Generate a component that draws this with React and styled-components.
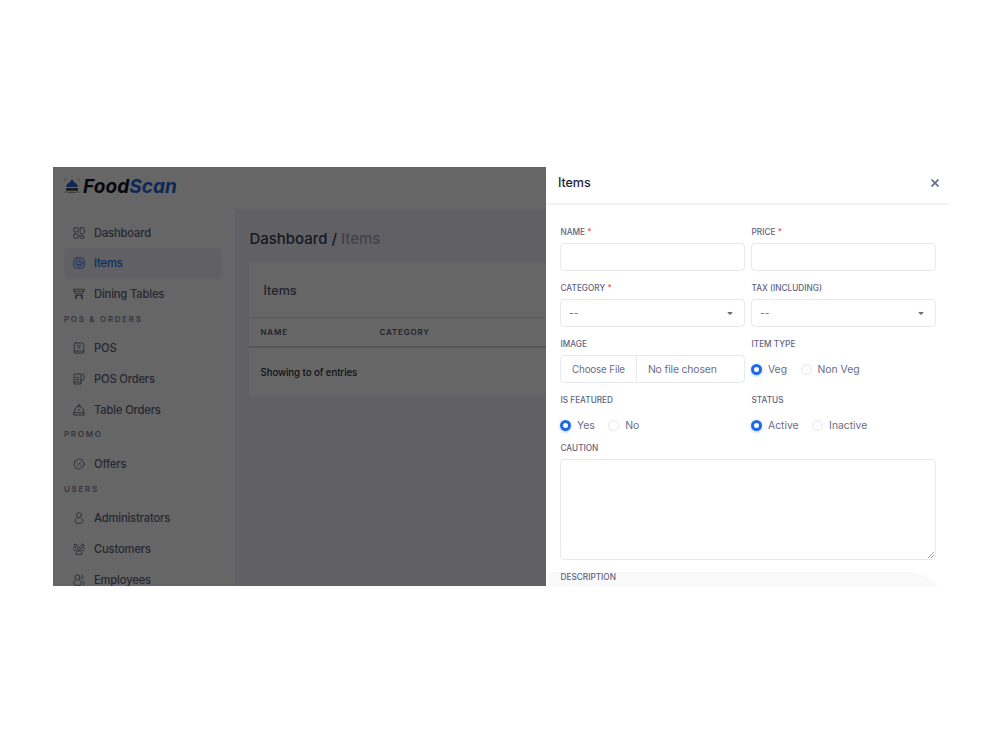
import React from "react";
import styled, { createGlobalStyle } from "styled-components";
import { FaXmark, FaCaretDown } from "react-icons/fa6";

const GlobalStyle = createGlobalStyle`
  *, *::before, *::after {
    box-sizing: border-box;
  }
  body {
    margin: 0;
    background: #fff;
    font-family: Inter, Roboto, sans-serif;
    color: #6a6d86;
  }
`;

const Page = styled.div`
  height: 750px;
  padding: 167px 50px 0 53px;
  overflow: hidden;
`;

const Screen = styled.div`
  display: grid;
  grid-template-columns: 493px 1fr;
  height: 419px;
  overflow: hidden;
`;

const Backdrop = styled.div`
  position: relative;
  display: grid;
  grid-template: 42px 1fr / 182px 1fr;
  height: 419px;
  overflow: hidden;
  background: #fff;

  &::after {
    content: "";
    position: absolute;
    inset: 0;
    background: rgba(0, 0, 0, 0.6);
  }
`;

const Header = styled.header`
  grid-column: 1 / -1;
  display: flex;
  align-items: center;
  padding: 0 0 4px 11px;
`;

const LogoText = styled.div`
  margin-left: 3px;
  padding-top: 1px;
  font-size: 19px;
  line-height: 20px;
  font-weight: 700;
  font-style: italic;
  letter-spacing: 0.08px;
  color: #14141e;

  span {
    color: #1f66d8;
  }
`;

const Sidebar = styled.nav`
  padding: 8.15px 13px 0 11px;
  overflow: hidden;
`;

const NavItem = styled.div`
  display: flex;
  align-items: center;
  gap: 9px;
  height: 30.8px;
  padding-left: 9px;
  border-radius: 5px;
  font-size: 11.2px;
  font-weight: 500;
  letter-spacing: -0.16px;
  color: ${(props) => (props.$active ? "#2a70e6" : "#62647e")};
  background: ${(props) => (props.$active ? "#f1f0fc" : "transparent")};
`;

const NavTitle = styled.div`
  height: 23.4px;
  font-size: 8px;
  line-height: 18.4px;
  font-weight: 600;
  letter-spacing: 1.7px;
  color: #85879a;
`;

const Main = styled.main`
  padding: 20px 0 0 14px;
  background: #f2f1fd;
  overflow: hidden;
`;

const Breadcrumb = styled.div`
  height: 34px;
  padding-left: 0.5px;
  font-size: 15px;
  line-height: 20px;
  font-weight: 500;
  letter-spacing: -0.02px;
  color: #3c3e54;

  span {
    color: #a0a3bd;
  }
`;

const Card = styled.section`
  height: 133px;
  background: #fff;
`;

const CardTitle = styled.h3`
  margin: 0;
  height: 55px;
  padding-left: 14.5px;
  font-size: 12.6px;
  line-height: 56px;
  font-weight: 500;
  color: #55576e;
  border-bottom: 1px solid #dcdee8;
`;

const TableHead = styled.div`
  display: grid;
  grid-template-columns: 119px 1fr;
  height: 30px;
  padding-left: 11.5px;
  font-size: 8px;
  line-height: 28px;
  font-weight: 600;
  letter-spacing: 0.8px;
  color: #55576e;
  border-bottom: 2px solid #d8dae4;
`;

const TableInfo = styled.div`
  padding-left: 11.5px;
  font-size: 9.7px;
  line-height: 49px;
  font-weight: 500;
  letter-spacing: -0.08px;
  color: #2c2e42;
`;

const Drawer = styled.aside`
  height: 419px;
  overflow: hidden;
  background: #fff;
`;

const DrawerHeader = styled.div`
  display: flex;
  align-items: center;
  justify-content: space-between;
  height: 38px;
  padding: 0 9.5px 5px 12px;
  border-bottom: 2px solid #f3f3f5;
  color: #666980;

  h2 {
    margin: 0;
    font-size: 12.6px;
    line-height: 18px;
    font-weight: 500;
    letter-spacing: -0.12px;
    color: #1f1f39;
  }
`;

const CloseIcon = styled(FaXmark)`
  stroke: currentColor;
  stroke-width: 12px;
`;

const Form = styled.form`
  display: grid;
  grid-template-columns: 185px 185px;
  column-gap: 6px;
  padding: 21px 14px 0;
`;

const Field = styled.div`
  grid-column: ${(props) => (props.$wide ? "1 / -1" : "auto")};
  height: ${(props) => props.$height || 56}px;
`;

// last row, cut off by the bottom edge of the drawer
const FadedField = styled(Field)`
  margin: 0 -13px;
  padding: 0 13px;
  background: #f9f9f9;
  clip-path: polygon(0 1px, 364px 1px, 378px 5px, 392px 15px, 0 15px);
`;

const Label = styled.div`
  height: 17px;
  padding-left: 0.5px;
  font-size: 8.25px;
  line-height: 12px;
  font-weight: 550;
  text-transform: uppercase;
  color: #5f6380;

  span {
    color: #ee5a5a;
  }
`;

const Control = styled.div`
  display: flex;
  align-items: center;
  justify-content: space-between;
  height: 28px;
  padding: 0 10px 0 8px;
  border: 1px solid #e8e9ee;
  border-radius: 4px;
  font-size: 10.2px;
`;

const FileControl = styled(Control)`
  justify-content: flex-start;
  padding: 0;
  letter-spacing: -0.15px;
`;

const FilePart = styled.span`
  padding: 0 11px;
  font-size: ${(props) => props.$size || "10.4px"};
  line-height: 27px;
  white-space: nowrap;

  & + & {
    border-left: 1px solid #e8e9ee;
  }
`;

const Radios = styled.div`
  display: flex;
  align-items: center;
  gap: 13.5px;
  height: 28px;
  font-size: 10.4px;
  letter-spacing: -0.02px;
`;

const Radio = styled.span`
  display: flex;
  align-items: center;
  gap: 6px;

  &::before {
    content: "";
    width: 11px;
    height: 11px;
    border-radius: 50%;
    border: ${(props) => (props.$checked ? "3px solid #1e69e8" : "1px solid #e5e6ec")};
    box-shadow: ${(props) => (props.$checked ? "0 1px 3px rgba(23, 105, 245, 0.35)" : "none")};
  }
`;

const TextArea = styled.div`
  display: flex;
  align-items: flex-end;
  justify-content: flex-end;
  height: 101px;
  border: 1px solid #e8e9ee;
  border-radius: 4px;
`;

const Icon = styled.svg`
  flex: none;
  width: 12px;
  height: 12px;
  fill: none;
  stroke: currentColor;
  stroke-width: 1.7;
  stroke-linecap: round;
  stroke-linejoin: round;
`;

const icons = {
  dashboard: (
    <>
      <rect x="1.5" y="1.5" width="8.5" height="8.5" rx="2" />
      <rect x="14" y="1.5" width="8.5" height="12" rx="2" />
      <rect x="1.5" y="14" width="8.5" height="8.5" rx="2" />
      <path d="M14 17.5h6.5a2 2 0 0 1 2 2v1a2 2 0 0 1-2 2H16a2 2 0 0 1-2-2z" />
    </>
  ),
  items: (
    <>
      <rect x="1.5" y="1.5" width="21" height="21" rx="6" />
      <circle cx="12" cy="12" r="6.5" />
      <path d="M9 12l3-2.5 3 2.5M10 15h4" />
    </>
  ),
  tables: (
    <path d="M1.5 2.5h21v4h-21zM3.5 6.5l1.5 5M20.5 6.5l-1.5 5M7.5 21V11h9v10M5 22v-7M19 22v-7M7.5 15h9" />
  ),
  pos: (
    <path d="M5 2h14a2.5 2.5 0 0 1 2.5 2.5V22h-19V4.5A2.5 2.5 0 0 1 5 2zM2.5 18h19M8 7.5h8M10 11.5h4" />
  ),
  posOrders: (
    <path d="M15 2H4a2 2 0 0 0-2 2v18h14V13M16 13V5a3 3 0 0 1 6 0v5a3 3 0 0 1-6 3M5.5 9h6M5.5 13h6M2 18h14" />
  ),
  tableOrders: (
    <path d="M3 17v-3a9 9 0 0 1 18 0v3M1.5 17.5h21V22h-21zM12 5V2M9 3.5l3-2 3 2M10.5 12h3" />
  ),
  offers: (
    <>
      <path d="M12 1.5l3 2 3.7.2 1 3.5 2.5 2.8-.5 4-1.5 3.5-3.5 1.7-2.2 2.3-2.5 1-3-1.5-4-.7-.8-3.5-2.4-3.3 1.2-3.5.3-3.7 4.2-2z" />
      <path d="M9 15l6-6M9.2 9.5h.1M14.8 14.5h.1" />
    </>
  ),
  admin: (
    <>
      <circle cx="12" cy="6.5" r="5" />
      <path d="M8 12.5c-3 1.5-4 4.5-3.5 7 .5 2 2 3 4 3h7c2 0 3.5-1 4-3 .5-2.5-.5-5.5-3.5-7" />
    </>
  ),
  customers: (
    <>
      <circle cx="5" cy="4.5" r="2.5" />
      <circle cx="19" cy="4.5" r="2.5" />
      <circle cx="12" cy="11" r="3" />
      <path d="M1.5 12c0-2 1.5-3 4-3M22.5 12c0-2-1.5-3-4-3M6 22c-.5-4 2-6 6-6s6.5 2 6 6zM3 15h4M17 15h4" />
    </>
  ),
  employees: (
    <>
      <circle cx="9" cy="6.5" r="5" />
      <path d="M5 12.5c-3 1.5-3.5 4.5-3.2 7 .3 2 1.7 3 3.7 3h7c2 0 3.4-1 3.7-3 .3-2.5-.2-5.5-3.2-7M17 2c4 1 4 8 0 9M19 14.5c3.5 1.5 4 5.5 1.5 8" />
    </>
  ),
};

const menu = [
  { icon: "dashboard", label: "Dashboard" },
  { icon: "items", label: "Items", active: true },
  { icon: "tables", label: "Dining Tables" },
  { title: "POS & ORDERS" },
  { icon: "pos", label: "POS" },
  { icon: "posOrders", label: "POS Orders" },
  { icon: "tableOrders", label: "Table Orders" },
  { title: "PROMO" },
  { icon: "offers", label: "Offers" },
  { title: "USERS" },
  { icon: "admin", label: "Administrators" },
  { icon: "customers", label: "Customers" },
  { icon: "employees", label: "Employees" },
];

const LogoMark = () => (
  <svg width="16" height="16" viewBox="0 0 16 16">
    <path d="M.5 3.5V1H3M13 1h2.5v2.5" fill="none" stroke="#aaa" strokeWidth=".7" />
    <path d="M2.3 9a5.7 5.5 0 0 1 4.2-5 1.6 1.6 0 1 1 3 0 5.7 5.5 0 0 1 4.2 5z" fill="#1f66d8" />
    <path d="M2 10h12v2.5H2z" fill="#444" />
    <path d="M1 15l2-2.5h10l2 2.5M4 14.3h8" fill="none" stroke="#777" />
  </svg>
);

const RadioField = ({ label, options, height }) => (
  <Field $height={height}>
    <Label>{label}</Label>
    <Radios>
      {options.map((option, i) => (
        <Radio key={option} $checked={i === 0}>
          {option}
        </Radio>
      ))}
    </Radios>
  </Field>
);

const App = () => (
  <Page>
    <GlobalStyle />
    <Screen>
      <Backdrop>
        <Header>
          <LogoMark />
          <LogoText>
            Food<span>Scan</span>
          </LogoText>
        </Header>
        <Sidebar>
          {menu.map((entry) =>
            entry.title ? (
              <NavTitle key={entry.title}>{entry.title}</NavTitle>
            ) : (
              <NavItem key={entry.label} $active={entry.active}>
                <Icon viewBox="0 0 24 24">{icons[entry.icon]}</Icon>
                {entry.label}
              </NavItem>
            )
          )}
        </Sidebar>
        <Main>
          <Breadcrumb>
            Dashboard / <span>Items</span>
          </Breadcrumb>
          <Card>
            <CardTitle>Items</CardTitle>
            <TableHead>
              <span>NAME</span>
              <span>CATEGORY</span>
            </TableHead>
            <TableInfo>Showing to of entries</TableInfo>
          </Card>
        </Main>
      </Backdrop>
      <Drawer>
        <DrawerHeader>
          <h2>Items</h2>
          <CloseIcon size={12} />
        </DrawerHeader>
        <Form>
          <Field>
            <Label>Name <span>*</span></Label>
            <Control />
          </Field>
          <Field>
            <Label>Price <span>*</span></Label>
            <Control />
          </Field>
          <Field>
            <Label>Category <span>*</span></Label>
            <Control>-- <FaCaretDown size={8} /></Control>
          </Field>
          <Field>
            <Label>Tax (including)</Label>
            <Control>-- <FaCaretDown size={8} /></Control>
          </Field>
          <Field>
            <Label>Image</Label>
            <FileControl>
              <FilePart $size="9.8px">Choose File</FilePart>
              <FilePart>No file chosen</FilePart>
            </FileControl>
          </Field>
          <RadioField label="Item type" options={["Veg", "Non Veg"]} />
          <RadioField label="Is featured" options={["Yes", "No"]} height={48} />
          <RadioField label="Status" options={["Active", "Inactive"]} height={48} />
          <Field $wide $height={129}>
            <Label>Caution</Label>
            <TextArea>
              <svg width="8" height="8" viewBox="0 0 8 8">
                <path d="M1 7l6-6M4 7l3-3" stroke="#888" strokeWidth=".8" />
              </svg>
            </TextArea>
          </Field>
          <FadedField $wide>
            <Label>Description</Label>
          </FadedField>
        </Form>
      </Drawer>
    </Screen>
  </Page>
);

export default App;
